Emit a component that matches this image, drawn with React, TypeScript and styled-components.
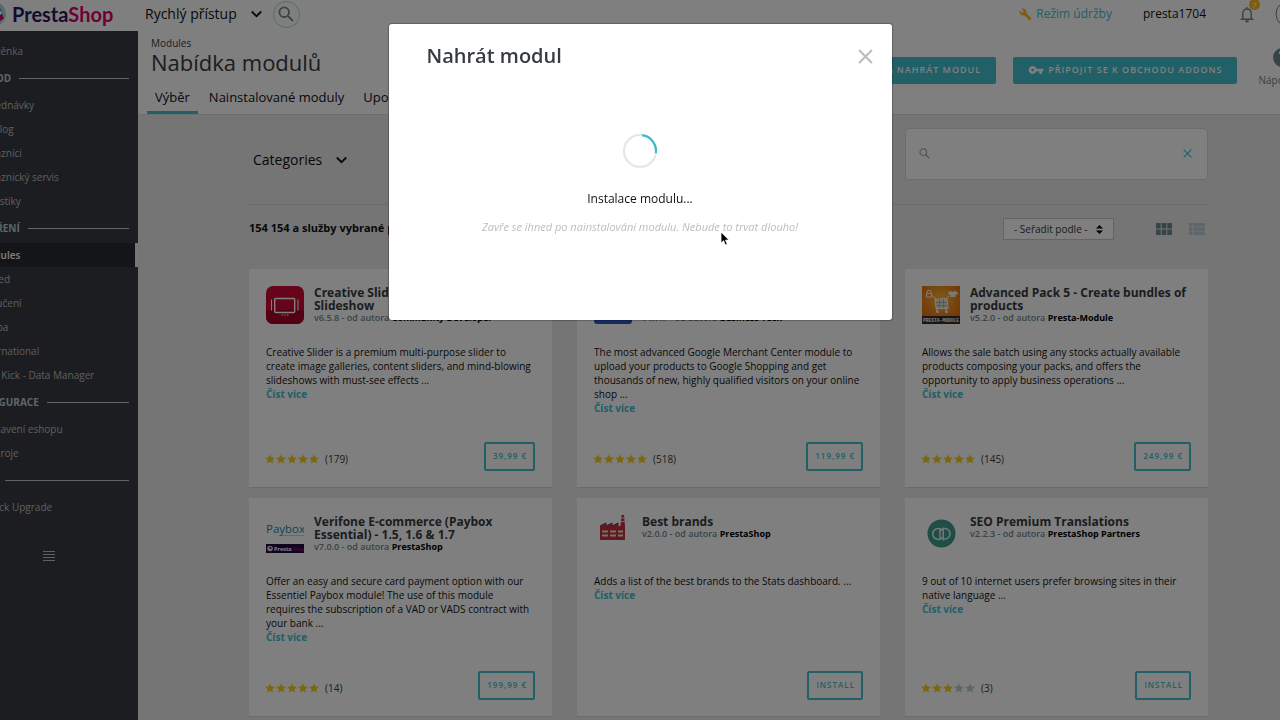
import React from 'react';
import styled, { createGlobalStyle, keyframes } from 'styled-components';

const teal = '#42c0cc';
const ink = '#363a41';
const slate = '#6c868e';

const GlobalStyle = createGlobalStyle`
  *, *::before, *::after { box-sizing: border-box; }
  body {
    margin: 0;
    overflow-x: hidden;
    background: #eaeaea;
    color: #111;
    font-family: "Open Sans", "Noto Sans", sans-serif;
    font-size: 10px;
    line-height: 14px;
  }
  button, input, select { font: inherit; color: inherit; }
  button { cursor: pointer; }
  a { color: inherit; text-decoration: none; }
  h1, h2, h3, p, ul { margin: 0; padding: 0; }
  ul { list-style: none; }
  svg { display: block; flex: none; }
`;

const Page = styled.div`
  margin: 0 -40px;
  min-height: 100vh;
  display: flex;
  flex-direction: column;
`;

/* ---------- top bar ---------- */

const TopBar = styled.header`
  display: flex;
  align-items: center;
  height: 31px;
  padding: 0 17px 3px 22px;
  background: #fff;
`;

const Brand = styled.a`
  display: flex;
  align-items: center;
  gap: 6px;
  width: 163px;
  font-family: Lato, sans-serif;
  font-size: 20px;
  font-weight: 700;
  line-height: 26px;
  color: #2a1660;
`;

const BrandAccent = styled.span`
  color: #df0067;
`;

const QuickAccess = styled.button`
  display: flex;
  align-items: center;
  gap: 14px;
  padding: 0;
  border: 0;
  background: none;
  font-size: 14px;
  line-height: 20px;
`;

const RoundButton = styled.button`
  display: grid;
  place-items: center;
  width: 27px;
  height: 27px;
  margin-left: 11px;
  padding: 0;
  border: 1px solid #bbcdd2;
  border-radius: 50%;
  background: none;
  color: ${slate};
`;

const TopRight = styled.div`
  display: flex;
  align-items: center;
  margin-left: auto;
  font-size: 12px;
  line-height: 18px;
`;

const Maintenance = styled.a`
  display: flex;
  align-items: center;
  gap: 4px;
  margin-right: 31px;
  color: ${teal};
`;

const BellButton = styled.button`
  position: relative;
  margin: 0 21px 0 34px;
  padding: 0;
  border: 0;
  background: none;
  color: ${slate};
`;

const Badge = styled.span`
  position: absolute;
  top: -7px;
  right: -6px;
  width: 11px;
  height: 11px;
  border-radius: 50%;
  background: #fbbb22;
  color: #fff;
  font-size: 8px;
  line-height: 11px;
  text-align: center;
`;

/* ---------- side menu ---------- */

const Columns = styled.div`
  display: flex;
  flex: 1;
`;

const Sidebar = styled.nav`
  flex: none;
  width: 178px;
  padding-top: 8px;
  background: ${ink};
  color: #bebebe;
`;

const MenuSection = styled.h2`
  display: flex;
  align-items: center;
  gap: 8px;
  height: 30px;
  padding: 0 9px 0 7px;
  color: #bbcdd2;
  font-size: 10px;
  font-weight: 700;
  &::after {
    content: "";
    flex: 1;
    height: 1px;
    background: #bbcdd2;
  }
`;

const MenuLink = styled.a<{ $active?: boolean }>`
  display: block;
  padding: 0 19px;
  line-height: 24px;
  border-right: ${p => (p.$active ? '3px solid #eee' : '0')};
  background: ${p => (p.$active ? '#282b30' : 'none')};
  color: ${p => (p.$active ? '#fff' : 'inherit')};
  font-weight: ${p => (p.$active ? 600 : 400)};
`;

const CollapseButton = styled.button`
  display: block;
  margin: 32px auto;
  padding: 0;
  border: 0;
  background: none;
  color: #bebebe;
`;

/* ---------- page head ---------- */

const Main = styled.main`
  flex: 1;
  min-width: 0;
`;

const PageHead = styled.div`
  display: flex;
  justify-content: space-between;
  align-items: flex-start;
  padding: 0 14px 0 9px;
  border-bottom: 1px solid #ddd;
  background: #fff;
`;

const Crumb = styled.p`
  padding: 5px 4px 0;
  color: ${ink};
`;

const PageTitle = styled.h1`
  padding: 0 4px;
  color: ${ink};
  font-size: 22px;
  font-weight: 400;
  line-height: 24px;
`;

const Tabs = styled.div`
  display: flex;
  gap: 3px;
  padding-top: 10px;
`;

const Tab = styled.a<{ $active?: boolean }>`
  padding: 0 8px;
  border-bottom: 3px solid ${p => (p.$active ? teal : 'transparent')};
  font-size: 13px;
  line-height: 27px;
`;

const HeadActions = styled.div`
  display: flex;
  align-items: center;
  padding-top: 17px;
`;

const PrimaryButton = styled.button`
  display: flex;
  align-items: center;
  gap: 4px;
  height: 27px;
  margin-right: 17px;
  padding: 0 15px;
  border: 0;
  border-radius: 2px;
  background: ${teal};
  color: #fff;
  font-size: 9px;
  font-weight: 600;
  letter-spacing: 1px;
  text-transform: uppercase;
`;

const HelpLink = styled.a`
  display: flex;
  flex-direction: column;
  align-items: center;
  gap: 6px;
  margin-left: 4px;
  padding-bottom: 5px;
  color: ${slate};
`;

/* ---------- filters ---------- */

const Content = styled.div`
  padding: 13px 112px 4px 111px;
`;

const ThreeColumns = styled.div`
  display: grid;
  grid-template-columns: repeat(3, minmax(0, 1fr));
  gap: 10px 25px;
`;

const Filters = styled(ThreeColumns)`
  align-items: center;
  padding-bottom: 24px;
  border-bottom: 1px solid #d8d8d8;
`;

const CategoryButton = styled.button`
  display: flex;
  align-items: center;
  gap: 14px;
  padding: 12px 4px 0;
  border: 0;
  background: none;
  font-size: 14px;
  line-height: 20px;
`;

const SearchBox = styled.form`
  grid-column: 3;
  display: flex;
  align-items: center;
  height: 52px;
  padding: 0 15px 2px 13px;
  border: 1px solid #d5dde0;
  border-radius: 4px;
  background: #fff;
  color: #9fb1b7;
`;

const SearchInput = styled.input`
  flex: 1;
  min-width: 0;
  padding: 4px 8px;
  border: 0;
  outline: 0;
  background: none;
`;

const ClearButton = styled.button`
  padding: 0;
  border: 0;
  background: none;
  color: ${teal};
`;

const SortRow = styled.div`
  display: flex;
  align-items: center;
  justify-content: space-between;
  padding: 13px 3px 29px 0;
`;

const Count = styled.strong`
  padding-bottom: 3px;
  font-size: 11px;
`;

const SortTools = styled.div`
  display: flex;
  align-items: center;
`;

const SelectWrap = styled.label`
  display: flex;
  align-items: center;
  height: 22px;
  margin-right: 42px;
  padding-right: 10px;
  border: 1px solid #bbcdd2;
  background: #fff;
`;

const Select = styled.select`
  appearance: none;
  width: 96px;
  margin-right: -4px;
  padding: 0 0 0 10px;
  border: 0;
  outline: 0;
  background: none;
  color: ${ink};
`;

const ViewButton = styled.button<{ $dim?: boolean }>`
  margin-left: ${p => (p.$dim ? '17px' : '0')};
  padding: 0;
  border: 0;
  background: none;
  color: ${p => (p.$dim ? '#bbcdd2' : slate)};
`;

/* ---------- module cards ---------- */

const Card = styled.article`
  display: flex;
  flex-direction: column;
  min-height: 219px;
  padding: 17px 17px 16px;
  border-bottom: 1px solid #d4d4d4;
  background: #fff;
`;

const CardHead = styled.div`
  display: flex;
  gap: 10px;
  min-height: 59px;
`;

const CardTitle = styled.h3`
  color: ${ink};
  font-size: 12px;
  font-weight: 700;
  line-height: 13px;
`;

const Author = styled.p`
  color: ${slate};
  font-size: 9px;
  font-weight: 600;
  line-height: 12px;
`;

const AuthorName = styled.strong`
  color: #000;
  font-weight: 700;
`;

const Description = styled.p`
  padding-right: 2px;
`;

const MoreLink = styled.a`
  align-self: flex-start;
  color: ${teal};
  font-weight: 700;
`;

const CardFoot = styled.div`
  display: flex;
  align-items: center;
  margin: auto 0 0 -1px;
`;

const Rating = styled.div`
  display: flex;
  align-items: center;
  gap: 1px;
  padding-top: 5px;
`;

const Votes = styled.span`
  margin-left: 5px;
  color: ${ink};
`;

const PriceButton = styled.button`
  height: 29px;
  margin-left: auto;
  padding: 0 6px 2px 7px;
  border: 2px solid ${teal};
  border-radius: 2px;
  background: none;
  color: ${teal};
  font-size: 8px;
  font-weight: 600;
  letter-spacing: 1px;
  text-transform: uppercase;
`;

/* ---------- dialog ---------- */

const Overlay = styled.div`
  position: fixed;
  inset: 0;
  z-index: 10;
  padding-top: 24px;
  background: rgba(0, 0, 0, 0.5);
`;

const Dialog = styled.section`
  position: relative;
  width: 100%;
  max-width: 503px;
  min-height: 296px;
  margin: 0 auto;
  border-radius: 3px;
  background: #fff;
  box-shadow: 0 0 1px 1px rgba(0, 0, 0, 0.25);
`;

const DialogHead = styled.div`
  display: flex;
  align-items: center;
  justify-content: space-between;
  padding: 18px 19px 0 38px;
`;

const DialogTitle = styled.h2`
  color: ${ink};
  font-size: 20px;
  font-weight: 600;
  line-height: 28px;
`;

const CloseButton = styled.button`
  padding: 0;
  border: 0;
  background: none;
  color: #bdbdbd;
`;

const DialogBody = styled.div`
  display: flex;
  flex-direction: column;
  align-items: center;
  padding: 64px 20px 0;
`;

const Progress = styled.p`
  margin-top: 21px;
  font-size: 12px;
  line-height: 20px;
`;

const Hint = styled.p`
  margin-top: 10px;
  color: #bdbdbd;
  font-size: 11px;
  font-style: italic;
  line-height: 16px;
`;

const Pointer = styled.svg`
  position: absolute;
  top: 207px;
  left: 331px;
`;

/* ---------- drawings ---------- */

const Chevron = () => (
  <svg width="11" height="8" viewBox="0 0 11 8" fill="none" stroke="currentColor" strokeWidth="1.800">
    <path d="M.8 1.500l4.700 4.700 4.700-4.700" />
  </svg>
);

const Lens = ({ size, weight }: { size: number; weight: number }) => (
  <svg width={size} height={size} viewBox="0 0 16 16" fill="none" stroke="currentColor" strokeWidth={weight}>
    <circle cx="6.2" cy="6.2" r="4.8" />
    <path d="M9.8 9.8l5.2 5.2" />
  </svg>
);

const Cross = ({ size, weight }: { size: number; weight: number }) => (
  <svg width={size} height={size} viewBox="0 0 14 14" fill="none" stroke="currentColor" strokeWidth={weight}>
    <path d="M1 1l12 12M13 1L1 13" />
  </svg>
);

const Mascot = () => (
  <svg width="24" height="24" viewBox="0 0 24 24">
    <circle cx="12" cy="12" r="12" fill="#a5d8e2" />
    <circle cx="11" cy="13" r="9.500" fill="#2a1a3c" />
    <path d="M10 8c5-4 10 0 10 4l-6 3z" fill="#fff" />
    <path d="M14 14c3-2 6-1 8 2-2 3-6 3-8 1z" fill="#df0067" />
    <circle cx="15" cy="10" r="1.400" fill="#2a1a3c" />
  </svg>
);

const Wrench = () => (
  <svg width="13" height="13" viewBox="0 0 24 24" fill="#fbbb22">
    <path d="M22.7 19l-9.1-9.1c.9-2.3.4-5-1.5-6.9-2-2-5-2.4-7.4-1.3L9 6 6 9 1.6 4.7C.4 7.1.9 10.1 2.9 12.100c1.900 1.900 4.600 2.400 6.900 1.500l9.100 9.100c.4.4 1 .4 1.400 0l2.300-2.300c.5-.4.5-1.100.1-1.400z" />
  </svg>
);

const Bell = () => (
  <svg width="14" height="17" viewBox="0 0 14 17" fill="none" stroke="currentColor" strokeWidth="1.400">
    <path d="M.5 13.300h13M2.800 13V7.500C2.800 4.800 4.500 3 7 3s4.200 1.800 4.200 4.500V13M7 3V1" />
    <path d="M5.300 15.300h3.400" strokeWidth="2" />
  </svg>
);

const Avatar = () => (
  <svg width="28" height="28" viewBox="0 0 28 28" fill="none" stroke={slate}>
    <circle cx="14" cy="14" r="13" />
    <circle cx="14" cy="11" r="4.500" />
    <path d="M5 22c2-5 16-5 18 0" />
  </svg>
);

const CloudUp = () => (
  <svg width="14" height="14" viewBox="0 0 24 24" fill="#fff">
    <path d="M19.350 10.040A7.490 7.490 0 0 0 12 4C9.110 4 6.600 5.640 5.350 8.040A5.994 5.994 0 0 0 0 14c0 3.310 2.690 6 6 6h13c2.760 0 5-2.240 5-5 0-2.640-2.050-4.780-4.650-4.960zM14 13v4h-4v-4H7l5-5 5 5h-3z" />
  </svg>
);

const Key = () => (
  <svg width="16" height="16" viewBox="0 0 24 24" fill="#fff">
    <path d="M12.650 10A5.990 5.990 0 0 0 7 6c-3.310 0-6 2.690-6 6s2.690 6 6 6a5.990 5.990 0 0 0 5.650-4H17v4h4v-4h2v-4H12.650zM7 14c-1.100 0-2-.9-2-2s.9-2 2-2 2 .9 2 2-.9 2-2 2z" />
  </svg>
);

const HelpIcon = () => (
  <svg width="19" height="19" viewBox="0 0 24 24" fill={slate}>
    <path d="M12 0a12 12 0 1 0 0 24 12 12 0 0 0 0-24zm1.500 20h-3v-3h3v3zm2.500-9.300l-1.200 1.200c-1 1-1.300 1.600-1.300 3.100h-3v-.8c0-1.600.6-2.700 1.600-3.700l1.500-1.500c.4-.4.6-.9.6-1.500a2.200 2.200 0 0 0-4.400 0H7.300a4.800 4.800 0 0 1 9.600 0c0 1.200-.4 2.300-.9 3.200z" />
  </svg>
);

const Bars = () => (
  <svg width="12" height="10" viewBox="0 0 12 10" stroke="currentColor">
    <path d="M0 .5h12M0 3.500h12M0 6.500h12M0 9.500h12" />
  </svg>
);

const SortArrows = () => (
  <svg width="7" height="9" viewBox="0 0 7 9">
    <path d="M0 3.500L3.500 0 7 3.500zM0 5.500h7L3.500 9z" fill="#000" />
  </svg>
);

const GridIcon = () => (
  <svg width="16" height="12" viewBox="0 0 16 12" fill="currentColor">
    <path d="M0 0h4.700v5.500H0zM5.700 0h4.700v5.500H5.700zM11.300 0H16v5.500h-4.700zM0 6.500h4.700V12H0zM5.700 6.500h4.700V12H5.700zM11.300 6.500H16V12h-4.700z" />
  </svg>
);

const ListIcon = () => (
  <svg width="16" height="12" viewBox="0 0 16 12" fill="currentColor">
    <path d="M0 0h3.500v3.400H0zM4.500 0H16v3.400H4.500zM0 4.300h3.500v3.400H0zM4.500 4.300H16v3.400H4.500zM0 8.600h3.500V12H0zM4.500 8.600H16V12H4.500z" />
  </svg>
);

const Star = ({ on }: { on: boolean }) => (
  <svg width="10" height="10" viewBox="0 0 20 20" fill={on ? '#f5cc1c' : '#bbcdd2'}>
    <path d="M10 .5l2.900 6.300 6.900.8-5.100 4.700 1.400 6.800L10 15.700l-6.100 3.400 1.400-6.800L.2 7.600l6.900-.8z" />
  </svg>
);

const SliderLogo = () => (
  <svg width="38" height="38" viewBox="0 0 38 38" fill="none" stroke="#fff">
    <rect width="38" height="38" rx="7" fill="#cc0a32" stroke="none" />
    <path d="M0 24h38v7a7 7 0 0 1-7 7H7a7 7 0 0 1-7-7z" fill="#a80526" stroke="none" />
    <rect x="8.700" y="12.500" width="20" height="14" rx="1" strokeWidth="1.400" />
    <path d="M5.500 13.500v11M32 13.500v11" />
    <path d="M15.500 29h7" strokeDasharray="1.500 1.200" />
  </svg>
);

const MerchantLogo = () => (
  <svg width="38" height="38" viewBox="0 0 38 38">
    <rect width="38" height="38" rx="3" fill="#2a56c6" />
    <path d="M10 14h18l-2 12H12z" fill="#fff" />
  </svg>
);

const PackLogo = () => (
  <svg width="38" height="38" viewBox="0 0 38 38">
    <defs>
      <radialGradient id="packGlow" cx=".5" cy=".35" r=".65">
        <stop offset="0" stopColor="#f9b93a" />
        <stop offset="1" stopColor="#e56a08" />
      </radialGradient>
    </defs>
    <rect width="38" height="38" fill="url(#packGlow)" />
    <path d="M13 13.500l12-1 1 10H14z" fill="#e9e2d5" stroke="#fff" />
    <path d="M15 23v3h2M24 23v3h2" fill="none" stroke="#fff" strokeWidth="1.400" />
    <path d="M14 16.500h11M14.500 19.500h11M17.500 13v9M21.500 13v9" stroke="#a8a29a" strokeWidth=".8" />
    <path d="M4.800 8c0-5 4.500-5 4.500 0M4.500 7.500h5V11h-5z" fill="none" stroke="#fdf3dc" strokeWidth="1.200" />
    <path d="M26 6.500l3-1.500 2 1 2-1 3 1.500-1 2.500-1.500-.5V11h-5V8.500L27 9z" fill="#fdf3dc" />
    <path d="M10 9.500l4 3.500M27.500 10l-4 3" stroke="#fff" />
    <rect y="30" width="38" height="8" fill="#3b2a24" />
    <text x="19" y="36" fill="#fff" fontSize="4.600" fontWeight="700" textAnchor="middle" fontFamily="Liberation Mono, monospace">PRESTA-MODULE</text>
  </svg>
);

const PayboxLogo = () => (
  <svg width="38" height="38" viewBox="0 0 38 38" fontFamily="Open Sans, sans-serif">
    <text x="0" y="18" fill="#2c7fae" fontSize="11.500">Paybox</text>
    <path d="M16 20.500h22" stroke="#8fb6c9" strokeWidth=".6" />
    <rect y="29" width="38" height="9" fill="#24063f" />
    <circle cx="4" cy="33.500" r="2.800" fill="#ddd" />
    <path d="M2.500 33l2.500-1.500.5 2.500z" fill="#24063f" />
    <text x="8" y="35.600" fill="#fff" fontSize="5.500" fontWeight="700">Presta<tspan fill="#8d0c66">Shop</tspan></text>
  </svg>
);

const FactoryLogo = () => (
  <svg width="38" height="38" viewBox="0 0 38 38">
    <path d="M6 25V11l6-3v3l6-3v3l6-3v3h2.500L27.500 0H30l1 11v14z" fill="#c5303c" />
    <path d="M6 11l6-3v3l6-3v3l6-3v3" fill="none" stroke="#5d4a4c" />
    <path d="M27 3h3.500M27 6.500h4" stroke="#f4e6e6" />
    <path d="M8 16.500h6M16 16.500h6M24 16.500h5M8 20.500h6M16 20.500h6M24 20.500h5" stroke="#f4dfe0" strokeWidth="1.800" />
  </svg>
);

const TranslationLogo = () => (
  <svg width="38" height="38" viewBox="0 0 38 38" fill="none" stroke="#e6f3f0" strokeWidth="1.500">
    <circle cx="19.500" cy="18.500" r="14" fill="#3f9c8c" stroke="none" />
    <path d="M20.500 22.500c-1 1.200-2.500 2-4.300 2a5.500 5.500 0 0 1 0-11c1.500 0 2.800.6 3.700 1.500M18 13v11.500" />
    <path d="M21.200 12.500v13M18.500 15.500c1-1.200 2.500-2 4.300-2a5.300 5.300 0 0 1 0 10.600h-1.600" />
  </svg>
);

const turn = keyframes`
  to { transform: rotate(360deg); }
`;

const SpinnerSvg = styled.svg<{ $running?: boolean }>`
  @media (prefers-reduced-motion: no-preference) {
    &:hover { animation: ${turn} 1s linear infinite; }
  }
`;

const Spinner = () => (
  <SpinnerSvg width="34" height="34" viewBox="0 0 34 34" fill="none" strokeWidth="2" role="img" aria-label="Instalace modulu">
    <circle cx="17" cy="17" r="16" stroke="#e3e5e7" />
    <path d="M19.200 1.200A16 16 0 0 1 32.900 19.200" stroke="#3fbac7" strokeWidth="2.200" />
  </SpinnerSvg>
);

/* ---------- data ---------- */

const menu: { title?: string; items: string[] }[] = [
  { items: ['Nástěnka'] },
  { title: 'OBCHOD', items: ['Objednávky', 'Katalog', 'Zákazníci', 'Zákaznický servis', 'Statistiky'] },
  { title: 'ROZŠÍŘENÍ', items: ['Modules', 'Vzhled', 'Doručení', 'Platba', 'International', 'Side Kick - Data Manager'] },
  { title: 'KONFIGURACE', items: ['Nastavení eshopu', 'Nástroje'] },
  { title: 'MORE', items: ['1-Click Upgrade'] },
];

type Module = {
  title: string;
  version: string;
  author: string;
  text: string;
  action: string;
  logo: React.ReactNode;
  stars?: number;
  votes?: number;
};

const modules: Module[] = [
  {
    title: 'Creative Slider - Responsive Slideshow',
    version: 'v6.5.8',
    author: 'Community Developer',
    text: 'Creative Slider is a premium multi-purpose slider to create image galleries, content sliders, and mind-blowing slideshows with must-see effects ...',
    action: '39,99 €',
    logo: <SliderLogo />,
    stars: 5,
    votes: 179,
  },
  {
    title: 'Google Merchant Center (Google Shopping)',
    version: 'v4.7.7',
    author: 'Business Tech',
    text: 'The most advanced Google Merchant Center module to upload your products to Google Shopping and get thousands of new, highly qualified visitors on your online shop ...',
    action: '119,99 €',
    logo: <MerchantLogo />,
    stars: 5,
    votes: 518,
  },
  {
    title: 'Advanced Pack 5 - Create bundles of products',
    version: 'v5.2.0',
    author: 'Presta-Module',
    text: 'Allows the sale batch using any stocks actually available products composing your packs, and offers the opportunity to apply business operations ...',
    action: '249,99 €',
    logo: <PackLogo />,
    stars: 5,
    votes: 145,
  },
  {
    title: 'Verifone E-commerce (Paybox Essential) - 1.5, 1.6 & 1.7',
    version: 'v7.0.0',
    author: 'PrestaShop',
    text: 'Offer an easy and secure card payment option with our Essentiel Paybox module! The use of this module requires the subscription of a VAD or VADS contract with your bank ...',
    action: '199,99 €',
    logo: <PayboxLogo />,
    stars: 5,
    votes: 14,
  },
  {
    title: 'Best brands',
    version: 'v2.0.0',
    author: 'PrestaShop',
    text: 'Adds a list of the best brands to the Stats dashboard. ...',
    action: 'Install',
    logo: <FactoryLogo />,
  },
  {
    title: 'SEO Premium Translations',
    version: 'v2.2.3',
    author: 'PrestaShop Partners',
    text: '9 out of 10 internet users prefer browsing sites in their native language ...',
    action: 'Install',
    logo: <TranslationLogo />,
    stars: 3,
    votes: 3,
  },
];

const ModuleCard = ({ module: m }: { module: Module }) => (
  <Card>
    <CardHead>
      {m.logo}
      <div>
        <CardTitle>{m.title}</CardTitle>
        <Author>
          {m.version} - od autora <AuthorName>{m.author}</AuthorName>
        </Author>
      </div>
    </CardHead>
    <Description>{m.text}</Description>
    <MoreLink href="#detail">Číst více</MoreLink>
    <CardFoot>
      {m.stars !== undefined && (
        <Rating>
          {[1, 2, 3, 4, 5].map(n => (
            <Star key={n} on={n <= (m.stars ?? 0)} />
          ))}
          <Votes>({m.votes})</Votes>
        </Rating>
      )}
      <PriceButton type="button">{m.action}</PriceButton>
    </CardFoot>
  </Card>
);

export default function App() {
  return (
    <>
      <GlobalStyle />
      <Page>
        <TopBar>
          <Brand href="#home">
            <Mascot />
            <span>
              Presta<BrandAccent>Shop</BrandAccent>
            </span>
          </Brand>
          <QuickAccess type="button">
            Rychlý přístup <Chevron />
          </QuickAccess>
          <RoundButton type="button" aria-label="Hledat">
            <Lens size={16} weight={1.8} />
          </RoundButton>
          <TopRight>
            <Maintenance href="#maintenance">
              <Wrench />
              Režim údržby
            </Maintenance>
            <a href="#shop">presta1704</a>
            <BellButton type="button" aria-label="Oznámení">
              <Bell />
              <Badge>7</Badge>
            </BellButton>
            <Avatar />
          </TopRight>
        </TopBar>

        <Columns>
          <Sidebar>
            {menu.map((group, i) => (
              <React.Fragment key={i}>
                {group.title && <MenuSection>{group.title}</MenuSection>}
                <ul>
                  {group.items.map(item => (
                    <li key={item}>
                      <MenuLink href="#menu" $active={item === 'Modules'}>
                        {item}
                      </MenuLink>
                    </li>
                  ))}
                </ul>
              </React.Fragment>
            ))}
            <CollapseButton type="button" aria-label="Sbalit menu">
              <Bars />
            </CollapseButton>
          </Sidebar>

          <Main>
            <PageHead>
              <div>
                <Crumb>Modules</Crumb>
                <PageTitle>Nabídka modulů</PageTitle>
                <Tabs>
                  <Tab href="#selection" $active>
                    Výběr
                  </Tab>
                  <Tab href="#installed">Nainstalované moduly</Tab>
                  <Tab href="#notifications">Upozornění</Tab>
                </Tabs>
              </div>
              <HeadActions>
                <PrimaryButton type="button">
                  <CloudUp />
                  Nahrát modul
                </PrimaryButton>
                <PrimaryButton type="button">
                  <Key />
                  Připojit se k obchodu Addons
                </PrimaryButton>
                <HelpLink href="#help">
                  <HelpIcon />
                  Nápověda
                </HelpLink>
              </HeadActions>
            </PageHead>

            <Content>
              <Filters>
                <CategoryButton type="button">
                  Categories <Chevron />
                </CategoryButton>
                <SearchBox>
                  <Lens size={11} weight={1.8} />
                  <SearchInput type="text" aria-label="Hledat modul" />
                  <ClearButton type="button" aria-label="Vymazat">
                    <Cross size={9} weight={1.8} />
                  </ClearButton>
                </SearchBox>
              </Filters>
              <SortRow>
                <Count>154 154 a služby vybrané pro vás</Count>
                <SortTools>
                  <SelectWrap>
                    <Select aria-label="Seřadit podle">
                      <option>- Seřadit podle -</option>
                    </Select>
                    <SortArrows />
                  </SelectWrap>
                  <ViewButton type="button" aria-label="Mřížka">
                    <GridIcon />
                  </ViewButton>
                  <ViewButton type="button" aria-label="Seznam" $dim>
                    <ListIcon />
                  </ViewButton>
                </SortTools>
              </SortRow>
              <ThreeColumns>
                {modules.map(m => (
                  <ModuleCard key={m.title} module={m} />
                ))}
              </ThreeColumns>
            </Content>
          </Main>
        </Columns>
      </Page>

      <Overlay>
        <Dialog role="dialog" aria-modal="true" aria-labelledby="dialog-title">
          <DialogHead>
            <DialogTitle id="dialog-title">Nahrát modul</DialogTitle>
            <CloseButton type="button" aria-label="Zavřít">
              <Cross size={15} weight={2} />
            </CloseButton>
          </DialogHead>
          <DialogBody>
            <Spinner />
            <Progress>Instalace modulu...</Progress>
            <Hint>Zavře se ihned po nainstalování modulu. Nebude to trvat dlouho!</Hint>
          </DialogBody>
          <Pointer width="12" height="16" viewBox="0 0 12 16">
            <path d="M1 1v11l2.600-2.300L5.300 14l2-.8-1.800-4.100H9z" fill="#000" stroke="#fff" strokeWidth=".8" />
          </Pointer>
        </Dialog>
      </Overlay>
    </>
  );
}
